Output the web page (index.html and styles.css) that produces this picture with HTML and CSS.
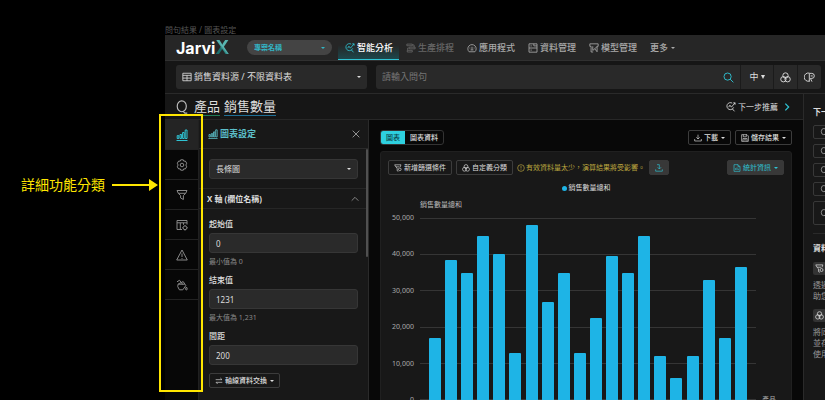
FILE: index.html
```html
<!DOCTYPE html>
<html lang="zh-Hant">
<head>
<meta charset="utf-8">
<title>JarviX</title>
<link rel="stylesheet" href="styles.css">
</head>
<body>
<svg class="defs" aria-hidden="true">
  <symbol id="chart" viewBox="0 0 12 12"><path d="M.5 11.500h11M1.200 9.500V6.600h1.600v2.900zM4 9.500v-4h1.600v4zM6.600 9.500v-6h1.600v6zM9.200 9.500V1h1.800v8.500z"/></symbol>
  <symbol id="gear" viewBox="0 0 12 12"><path d="M4.700.8h2.600l.5 1.400 1.500-.2 1.400 2.200L9.900 6l.8 1.800-1.400 2.200-1.500-.2-.5 1.400H4.700l-.5-1.400-1.500.2-1.400-2.200L2.100 6l-.8-1.800L2.700 2l1.500.2z"/><circle cx="6" cy="6" r="1.800"/></symbol>
  <symbol id="funnel" viewBox="0 0 12 12"><path d="M1 1.500h10L9.600 4.500 7.400 6.500v4L4.600 9V6.500L2.400 4.500zM2.400 4.300h7.200"/></symbol>
  <symbol id="funnelgear" viewBox="0 0 12 12"><path d="M1 1.200h9.500L9.200 4.500M1 1.200l2 3.600 1.800 1.700v3.700l1.700.8M3 4.300h5"/><circle cx="8.700" cy="8" r="2"/></symbol>
  <symbol id="tablegear" viewBox="0 0 12 12"><path d="M6 10.500H1v-9h10v4M1 3.800h10M4.300 3.800v6.700M7.500 3.800v2"/><circle cx="9" cy="8.800" r="1.900"/><path d="M9 6v.8M9 10.800v.8M6.300 8.800h.8M10.900 8.800h.8"/></symbol>
  <symbol id="warn" viewBox="0 0 12 12"><path d="M6 1l5.300 10H.7zM6 4.500v3.500M6 9v.9"/></symbol>
  <symbol id="bucket" viewBox="0 0 12 12"><path d="M2.200 5l5-2.400 2.600 4-3 4.200H3.400L1.700 7.500zM1 2.800l2.500-1.500 3.300 4.200M2.200 5.200h6.500M10.400 8c1 1.500 1.200 2.900 0 2.900s-1-1.400 0-2.900z"/></symbol>
  <symbol id="search" viewBox="0 0 12 12"><circle cx="5" cy="5" r="3.900"/><path d="M7.800 7.800l3.500 3.500"/></symbol>
  <symbol id="analyze" viewBox="0 0 12 12"><path d="M7.500 1.400A4.200 4.200 0 1 0 9.200 6.500M7.600 8.200l2.600 3M3.200 6.200l1.500-2.400 1.800 2.400L10.800 1M8.700 1h2.200v2.200"/></symbol>
  <symbol id="flow" viewBox="0 0 12 12"><path d="M1 1.300h6.500v2H1zM4 5h7v2H4zM1.500 8.800h6v2h-6zM7.500 2.300h2.200V5M4 6H2v2.800"/></symbol>
  <symbol id="gauge" viewBox="0 0 12 12"><path d="M2.500 10.500A5 5 0 1 1 9.500 10.500zM6 8V4.500M3 6h1M8 6h1M4.300 8.300h3.400"/></symbol>
  <symbol id="data" viewBox="0 0 12 12"><path d="M1.200 1h9.600v10H1.200zM1.200 6h9.600M3 3.500h1.500M7 1v2.500h3.800M3 8.500h1.500"/></symbol>
  <symbol id="model" viewBox="0 0 12 12"><path d="M5 10.800H2.500V4H1V1h10v3H9.700v6.500M4.500 4v5L9.500 4.500M7 7l2.700 3.500"/></symbol>
  <symbol id="table" viewBox="0 0 12 12"><path d="M1 1.500h10v9H1zM1 4h10M1 7.300h10M6 4v6.500"/></symbol>
  <symbol id="group" viewBox="0 0 12 12"><circle cx="6" cy="3.800" r="2.900"/><circle cx="3.700" cy="7.900" r="2.900"/><circle cx="8.300" cy="7.900" r="2.900"/></symbol>
  <symbol id="chat" viewBox="0 0 12 12"><path d="M6 1.300A4.500 4.500 0 1 0 6 9.900M5.800 10.500V2M5.800 1.500h2.700a2.600 2.600 0 1 1 0 5.500H7M7.300 4.300h2.200M7 7l1.700 3.500"/></symbol>
  <symbol id="close" viewBox="0 0 12 12"><path d="M2 2l8 8M10 2l-8 8"/></symbol>
  <symbol id="up" viewBox="0 0 12 12"><path d="M2 8l4-4 4 4"/></symbol>
  <symbol id="right" viewBox="0 0 12 12"><path d="M4 2l4 4-4 4"/></symbol>
  <symbol id="swap" viewBox="0 0 12 12"><path d="M1 4h9.500L8 1.500M11 8H1.500L4 10.500"/></symbol>
  <symbol id="download" viewBox="0 0 12 12"><path d="M6 1v6.500M3.500 5L6 7.500 8.500 5M1 7.500v3h10v-3"/></symbol>
  <symbol id="import" viewBox="0 0 12 12"><path d="M3 1h3.500v6.500M4 5l2.500 2.500L9 5M1 8v2.800h10V8"/></symbol>
  <symbol id="save" viewBox="0 0 12 12"><path d="M1 1h8l2 2v8H1zM3.500 1v3.200h4.500V1M3 11V6.800h6V11M4.500 8.800h3"/></symbol>
  <symbol id="doc" viewBox="0 0 12 12"><path d="M1.500 1h6L10.500 4v7h-9zM7.500 1v3h3M4 9V6M6 9V5M8 9V7"/></symbol>
  <symbol id="alert" viewBox="0 0 12 12"><circle cx="6" cy="6" r="5"/><path d="M6 3v3.800M6 8v1"/></symbol>
  <symbol id="ask" viewBox="0 0 12 12"><ellipse cx="5.800" cy="5.400" rx="3.900" ry="4.700"/><path d="M7 9.800l1.500 1.400h2"/></symbol>
</svg>

<div class="page">
  <section class="note">
    <p class="note-text">詳細功能分類</p>
    <svg class="arrow" viewBox="0 0 46 12"><path d="M0 5h37V0l9 6-9 6V7H0z"/></svg>
  </section>

  <div class="frame">
    <p class="frame-name">問句結果 / 圖表設定</p>
    <div class="highlight"></div>
    <div class="app">
      <header class="topbar">
        <a class="logo" href="#">Jarvi<span class="logo-x">X</span></a>
        <label class="pick pill"><select aria-label="專案名稱"><option>專案名稱</option></select><i class="caret"></i></label>
        <nav class="nav">
          <a class="active" href="#"><svg><use href="#analyze"/></svg>智能分析</a>
          <a class="dim" href="#"><svg><use href="#flow"/></svg>生產排程</a>
          <a href="#"><svg><use href="#gauge"/></svg>應用程式</a>
          <a href="#"><svg><use href="#data"/></svg>資料管理</a>
          <a href="#"><svg><use href="#model"/></svg>模型管理</a>
          <a href="#">更多<i class="caret"></i></a>
        </nav>
      </header>

      <div class="query">
        <label class="pick source"><svg><use href="#table"/></svg><select aria-label="資料源"><option>銷售資料源 / 不限資料表</option></select><i class="caret"></i></label>
        <div class="search">
          <input type="text" placeholder="請輸入問句" aria-label="問句">
          <button class="go" aria-label="搜尋"><svg><use href="#search"/></svg></button>
          <button class="lang">中<i class="caret"></i></button>
          <button aria-label="分類"><svg><use href="#group"/></svg></button>
          <button aria-label="對話"><svg><use href="#chat"/></svg></button>
        </div>
      </div>

      <div class="body">
        <div class="work">
          <div class="titlebar">
            <svg class="ask"><use href="#ask"/></svg>
            <h1><span class="dim-word">產品</span><span class="val-word">銷售數量</span></h1>
            <a class="next" href="#"><svg><use href="#analyze"/></svg>下一步推薦<svg class="chev"><use href="#right"/></svg></a>
          </div>
          <div class="columns">
            <div class="rail">
              <button class="on" aria-label="圖表"><svg><use href="#chart"/></svg></button>
              <button aria-label="設定"><svg><use href="#gear"/></svg></button>
              <button aria-label="篩選"><svg><use href="#funnel"/></svg></button>
              <button aria-label="表格"><svg><use href="#tablegear"/></svg></button>
              <button aria-label="警示"><svg><use href="#warn"/></svg></button>
              <button aria-label="顏色"><svg><use href="#bucket"/></svg></button>
            </div>

            <section class="panel">
              <header class="panel-head"><svg><use href="#chart"/></svg><h2>圖表設定</h2><button aria-label="關閉"><svg><use href="#close"/></svg></button></header>
              <div class="scroll">
                <div class="form">
                  <label class="pick kind"><select aria-label="圖表類型"><option>長條圖</option></select><i class="caret"></i></label>
                  <button class="section">X 軸 (欄位名稱)<svg><use href="#up"/></svg></button>
                  <div class="fields">
                    <div class="field"><label for="start">起始值</label><input id="start" type="text" value="0"><small>最小值為 0</small></div>
                    <div class="field"><label for="end">結束值</label><input id="end" type="text" value="1231"><small>最大值為 1,231</small></div>
                    <div class="field"><label for="step">間距</label><input id="step" type="text" value="200"></div>
                    <button class="btn swap"><svg><use href="#swap"/></svg>軸線資料交換<i class="caret"></i></button>
                  </div>
                </div>
                <div class="thumb"></div>
              </div>
            </section>

            <main class="main">
              <div class="row">
                <div class="tabs"><button class="on">圖表</button><button>圖表資料</button></div>
                <button class="btn push"><svg><use href="#download"/></svg>下載<i class="caret"></i></button>
                <button class="btn"><svg><use href="#save"/></svg>儲存結果<i class="caret"></i></button>
              </div>
              <section class="card">
                <div class="row">
                  <button class="btn"><svg><use href="#funnelgear"/></svg>新增篩選條件</button>
                  <button class="btn"><svg><use href="#group"/></svg>自定義分類</button>
                  <p class="alert"><svg><use href="#alert"/></svg>有效資料量太少，演算結果將受影響。</p>
                  <button class="btn solid" aria-label="匯入"><svg><use href="#import"/></svg></button>
                  <button class="btn solid push"><svg><use href="#doc"/></svg>統計資訊<i class="caret"></i></button>
                </div>
                <p class="legend">銷售數量總和</p>
                <p class="unit">銷售數量總和</p>
                <div class="chart">
                  <div class="ticks"><span>50,000</span><span>40,000</span><span>30,000</span><span>20,000</span><span>10,000</span><span>0</span></div>
                  <div class="plot">
                    <div class="lines"><i></i><i></i><i></i><i></i><i></i><i></i></div>
                    <div class="bars">
                      <i style="height:34%"></i><i style="height:77%"></i><i style="height:70%"></i><i style="height:90%"></i><i style="height:80%"></i>
                      <i style="height:26%"></i><i style="height:96%"></i><i style="height:54%"></i><i style="height:70%"></i><i style="height:26%"></i>
                      <i style="height:45%"></i><i style="height:79%"></i><i style="height:70%"></i><i style="height:90%"></i><i style="height:24%"></i>
                      <i style="height:12%"></i><i style="height:24%"></i><i style="height:66%"></i><i style="height:34%"></i><i style="height:73%"></i>
                    </div>
                  </div>
                  <span class="axis">產品</span>
                </div>
              </section>
            </main>
          </div>
        </div>

        <aside class="side">
          <h3>下一步</h3>
          <div class="asks">
            <button aria-label="推薦一"><svg><use href="#ask"/></svg></button>
            <button aria-label="推薦二"><svg><use href="#ask"/></svg></button>
            <button aria-label="推薦三"><svg><use href="#ask"/></svg></button>
            <button aria-label="推薦四"><svg><use href="#ask"/></svg></button>
            <button class="tall" aria-label="推薦五"><svg><use href="#ask"/></svg></button>
          </div>
          <hr>
          <h3>資料</h3>
          <span class="chip"><svg><use href="#funnelgear"/></svg></span>
          <p>透過<br>助您</p>
          <span class="chip"><svg><use href="#group"/></svg></span>
          <p>將同<br>並存<br>使用</p>
        </aside>
      </div>
    </div>
  </div>
</div>
</body>
</html>
```

FILE: styles.css
```css
* { box-sizing: border-box; margin: 0; padding: 0; }

body {
  background: #000;
  color: #ddd;
  font: 7px/10px "Noto Sans", "Noto Sans CJK TC", sans-serif;
  height: 100vh;
  overflow: hidden;
}

button, input, select { font: inherit; color: inherit; background: none; border: 0; outline: 0; }
select { appearance: none; }
a { color: inherit; text-decoration: none; }
svg { width: 10px; height: 10px; flex: none; fill: none; stroke: currentColor; stroke-width: 1; }
.defs { position: absolute; width: 0; height: 0; }

.caret {
  flex: none;
  border: 2px solid transparent;
  border-top: 2px solid currentColor;
  border-bottom: 0;
}

.page { display: flex; height: 100vh; overflow: hidden; }

/* Annotation beside the frame */
.note {
  flex: 0 0 165px;
  display: flex;
  align-items: center;
  gap: 7px;
  height: 370px;
  padding-left: 21px;
  color: #ffe600;
}
.note-text { font-size: 14px; line-height: 20px; white-space: nowrap; }
.arrow { width: 46px; height: 12px; fill: #ffe600; stroke: none; }

.frame { flex: 1; min-width: 0; position: relative; padding-top: 24px; }
.frame-name { color: #555; line-height: 11px; font-size: 8px; }
.highlight {
  position: absolute;
  z-index: 2;
  left: -6px;
  top: 114px;
  width: 44px;
  height: 278px;
  border: 2px solid #ffe600;
  pointer-events: none;
}
.app { background: #161616; }

/* Top bar */
.topbar {
  display: flex;
  align-items: center;
  height: 26px;
  padding-left: 11px;
  background: #262626;
  border-bottom: 1px solid #303030;
}
.logo {
  flex: 0 0 71px;
  display: flex;
  align-items: baseline;
  color: #fff;
  font: 700 16px/24px Inter, sans-serif;
}
.logo-x {
  font-size: 19px;
  color: transparent;
  background: linear-gradient(50deg, #1b6f6d 45%, #58b5b1 55%);
  background-clip: text;
}
.pick { display: flex; align-items: center; }
.pick select { flex: 1; min-width: 0; }
.pill {
  width: 85px;
  height: 15px;
  padding: 0 7px;
  border-radius: 8px;
  background: #444;
  color: #33b5c4;
  font-weight: 700;
}
.nav {
  display: flex;
  height: 25px;
  margin-left: 6px;
  color: #aaa;
  font-size: 9px;
  font-weight: 500;
}
.nav a { display: flex; align-items: center; gap: 2px; padding: 0 6px 0 7px; white-space: nowrap; }
.nav .dim { color: #666; }
.nav .active {
  color: #fff;
  background: linear-gradient(#262626 40%, #1c494e);
  box-shadow: inset 0 -1px #2fc3d3;
}
.nav .active svg { color: #2fc3d3; }

/* Query row */
.query {
  display: flex;
  gap: 9px;
  padding: 4px 4px 4px 11px;
  border-bottom: 1px solid #2a2a2a;
  font-size: 9px;
}
.source {
  flex: 0 0 191px;
  height: 24px;
  gap: 2px;
  padding: 0 6px;
  border-radius: 3px;
  background: #292929;
}
.search {
  flex: 1;
  display: flex;
  height: 24px;
  border-radius: 3px;
  background: #292929;
}
.search input { flex: 1; min-width: 0; padding-left: 6px; }
.search input::placeholder { color: #777; opacity: 1; }
.search button {
  flex: 0 0 24px;
  display: flex;
  align-items: center;
  justify-content: center;
  gap: 2px;
  border-left: 1px solid #1b1b1b;
}
.search svg { width: 11px; height: 11px; }
.search .go { border: 0; color: #2fc3d3; }
.search .lang { flex-basis: 33px; }
.search .caret { border-top-width: 4px; }

/* Body */
.body { display: flex; }
.work { flex: 1; min-width: 0; }
.titlebar {
  display: flex;
  align-items: center;
  height: 26px;
  padding: 0 11px 0 10px;
  border-bottom: 1px solid #272727;
}
.ask { width: 14px; height: 14px; color: #bbb; }
h1 { display: flex; gap: 4px; margin-left: 5px; font-size: 13px; font-weight: 400; line-height: 18px; }
.dim-word { border-bottom: 1px solid #1f7a55; }
.val-word { border-bottom: 1px solid #1f6f96; }
.next { display: flex; align-items: center; gap: 2px; margin-left: auto; font-size: 8px; }
.next .chev { margin-left: 2px; color: #2fc3d3; stroke-width: 1.5; }

.columns { display: flex; height: 480px; }
.rail { flex: 0 0 34px; background: #070707; border-right: 1px solid #202020; }
.rail button {
  display: flex;
  align-items: center;
  justify-content: center;
  width: 100%;
  height: 30px;
  border-bottom: 1px solid #222;
  color: #888;
}
.rail svg { width: 12px; height: 12px; }
.rail .on { background: #242424; color: #2fc3d3; }

.panel { flex: 0 0 170px; background: #181818; border-right: 1px solid #2a2a2a; }
.panel-head {
  display: flex;
  align-items: center;
  gap: 2px;
  height: 29px;
  padding: 0 7px 0 9px;
  border-bottom: 1px solid #2a2a2a;
  color: #5cbfca;
}
.panel-head h2 { flex: 1; font-size: 9px; }
.panel-head button { display: flex; color: #aaa; }
.scroll { display: flex; }
.form { flex: 1; min-width: 0; }
.thumb { width: 2px; height: 108px; background: #505050; border-radius: 1px; }
.kind, .field input {
  height: 20px;
  padding: 0 6px;
  border: 1px solid #363636;
  border-radius: 3px;
  background: #2a2a2a;
  font-size: 8px;
}
.kind { margin: 10px 8px 9px 10px; }
.section {
  display: flex;
  align-items: center;
  justify-content: space-between;
  width: 100%;
  height: 21px;
  padding: 0 6px 0 8px;
  border-top: 1px solid #262626;
  border-bottom: 1px solid #262626;
  font-size: 8px;
  font-weight: 700;
}
.section svg { color: #999; }
.fields { display: flex; flex-direction: column; gap: 7px; padding: 9px 8px 9px 10px; }
.field { display: flex; flex-direction: column; }
.field label { margin-bottom: 3px; font-size: 8px; line-height: 12px; font-weight: 500; }
.field small { margin-top: 4px; color: #8a8a8a; font-size: 7px; line-height: 10px; }

.btn {
  display: flex;
  align-items: center;
  gap: 2px;
  height: 15px;
  padding: 0 5px;
  border: 1px solid #3c3c3c;
  border-radius: 2px;
  font-weight: 500;
  white-space: nowrap;
}
.btn svg { width: 8px; height: 8px; }
.btn .caret, .nav .caret { margin-left: 1px; }
.swap { align-self: flex-start; margin-top: 1px; }
.push { margin-left: auto; }
.solid { border-color: #383838; background: #383838; color: #2fc3d3; padding: 0 5px; }

.main { flex: 1; min-width: 0; padding: 10px 11px 0; background: #080808; }
.row { display: flex; gap: 4px; }
.tabs { display: flex; height: 15px; border: 1px solid #333; border-radius: 3px; }
.tabs button { padding: 0 5px; white-space: nowrap; font-weight: 500; }
.tabs .on { background: #2ed0df; color: #0b4248; border-radius: 2px 0 0 2px; }

.card {
  height: 340px;
  margin-top: 6px;
  padding: 8px 7px;
  border: 1px solid #202020;
  border-radius: 3px;
  background: #181818;
}
.card .btn { font-weight: 400; }
.alert { display: flex; align-items: center; gap: 1px; color: #bca63f; white-space: nowrap; }
.alert svg { width: 8px; height: 8px; }
.legend {
  display: flex;
  align-items: center;
  justify-content: center;
  gap: 2px;
  margin-top: 7px;
  line-height: 12px;
}
.legend::before { content: ""; width: 5px; height: 5px; border-radius: 50%; background: #1eb4e6; }
.unit { margin: 5px 0 7px 32px; line-height: 12px; color: #bbb; }
.chart {
  display: grid;
  grid-template-columns: 26px 1fr 22px;
  gap: 6px;
  height: 182px;
  color: #aaa;
}
.ticks { display: flex; flex-direction: column; justify-content: space-between; text-align: right; margin: -5px 0; }
.plot { position: relative; }
.lines { position: absolute; inset: 0; display: flex; flex-direction: column; justify-content: space-between; }
.lines i { height: 1px; background: #353535; }
.bars {
  position: relative;
  display: flex;
  align-items: flex-end;
  justify-content: space-between;
  height: 100%;
  padding: 0 9px;
}
.bars i { width: 12px; background: #1eb4e6; border-radius: 1px 1px 0 0; }
.axis { align-self: end; margin-bottom: -5px; }

/* Side panel */
.side {
  flex: 0 0 22px;
  overflow: hidden;
  padding: 12px 0 0 9px;
  border-left: 1px solid #2a2a2a;
  background: #181818;
  white-space: nowrap;
  color: #999;
}
.side h3 { color: #ddd; font-size: 8px; line-height: 12px; }
.asks { display: flex; flex-direction: column; gap: 5px; margin-top: 7px; }
.asks button {
  display: flex;
  align-items: center;
  width: 200%;
  height: 14px;
  padding-left: 6px;
  border: 1px solid #383838;
  border-radius: 2px;
  color: #bbb;
}
.asks svg { width: 8px; height: 8px; }
.asks .tall { height: 24px; }
.side hr { margin: 8px 0; border: 0; border-top: 1px solid #2a2a2a; }
.chip {
  display: flex;
  align-items: center;
  justify-content: center;
  width: 13px;
  height: 13px;
  margin: 8px 0 4px;
  border-radius: 2px;
  background: #333;
  color: #ddd;
}
.chip svg { width: 9px; height: 9px; }
.side p { font-size: 8px; line-height: 11px; }
```
